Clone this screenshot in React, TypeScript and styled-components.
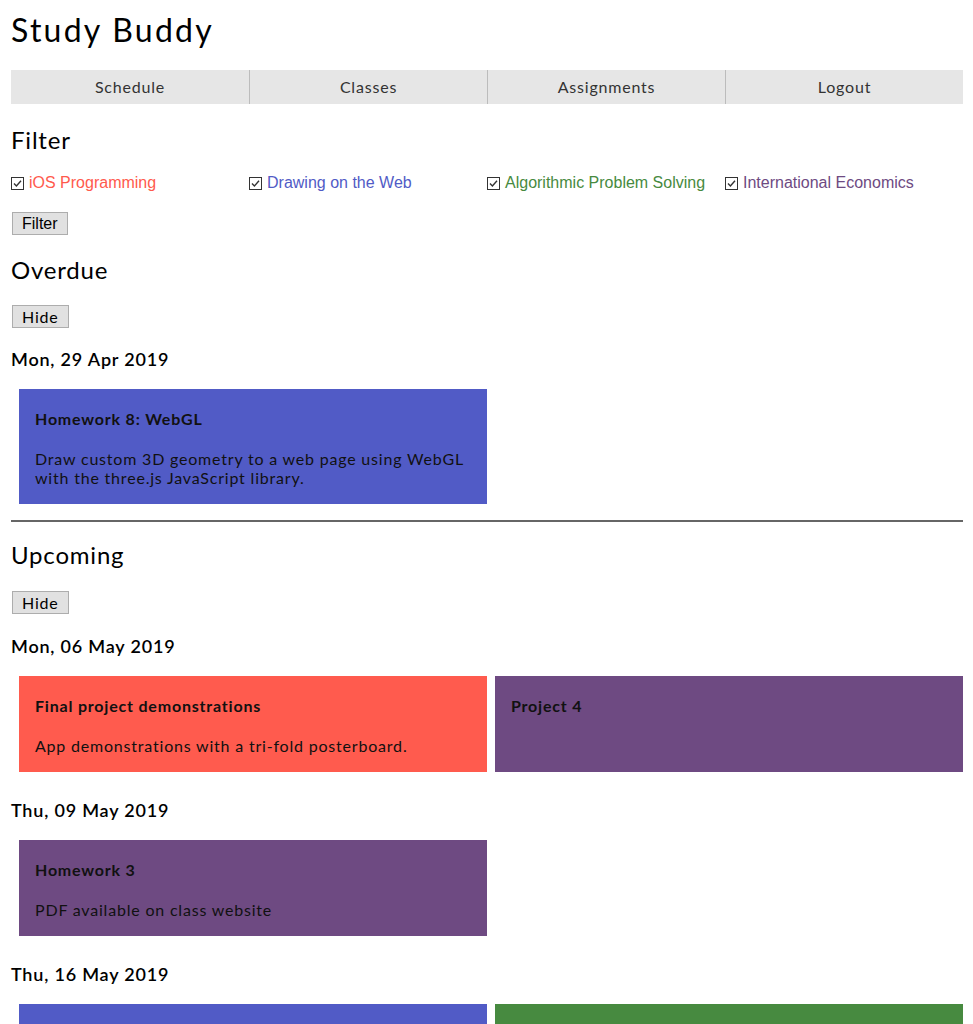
import React from "react";
import styled, { createGlobalStyle } from "styled-components";

const GlobalStyle = createGlobalStyle`
  body {
    margin: 0;
    background: #fff;
    color: #000;
    font-family: "Lato", "Liberation Sans", sans-serif;
    letter-spacing: 0.05em;
  }
`;

const classes = [
  { name: "iOS Programming", color: "#ff5a4d" },
  { name: "Drawing on the Web", color: "#515bc6" },
  { name: "Algorithmic Problem Solving", color: "#478a40" },
  { name: "International Economics", color: "#6e4a82" }
];

const CARD = {
  red: "#ff5b4e",
  blue: "#515bc6",
  green: "#478a40",
  purple: "#6e4a82"
};

interface Item {
  title?: string;
  text?: string;
  color: string;
}

interface Day {
  date: string;
  items: Item[];
}

const overdue: Day[] = [
  {
    date: "Mon, 29 Apr 2019",
    items: [
      {
        title: "Homework 8: WebGL",
        text: "Draw custom 3D geometry to a web page using WebGL with the three.js JavaScript library.",
        color: CARD.blue
      }
    ]
  }
];

const upcoming: Day[] = [
  {
    date: "Mon, 06 May 2019",
    items: [
      {
        title: "Final project demonstrations",
        text: "App demonstrations with a tri-fold posterboard.",
        color: CARD.red
      },
      { title: "Project 4", color: CARD.purple }
    ]
  },
  {
    date: "Thu, 09 May 2019",
    items: [
      { title: "Homework 3", text: "PDF available on class website", color: CARD.purple }
    ]
  },
  {
    date: "Thu, 16 May 2019",
    items: [
      { title: "Homework 9", text: "Shaders.", color: CARD.blue },
      { title: "Final exam", text: "Cumulative.", color: CARD.green }
    ]
  }
];

const CheckIcon = () => (
  <svg width="13" height="13" viewBox="0 0 13 13">
    <rect x="0.5" y="0.5" width="12" height="12" fill="#fff" stroke="#333" />
    <path d="M3 6.6 L5.4 9 L10 3.8" fill="none" stroke="#333" strokeWidth="1.4" />
  </svg>
);

const DayBlock = ({ date, items }: Day) => (
  <>
    <DateHeading>{date}</DateHeading>
    <CardGrid>
      {items.map((item, i) => (
        <Card key={i} $bg={item.color}>
          <CardTitle>{item.title}</CardTitle>
          {item.text && <CardText>{item.text}</CardText>}
        </Card>
      ))}
    </CardGrid>
  </>
);

const App = () => (
  <>
    <GlobalStyle />
    <Page>
      <Title>Study Buddy</Title>
      <Nav>
        <NavItem>Schedule</NavItem>
        <NavItem>Classes</NavItem>
        <NavItem>Assignments</NavItem>
        <NavItem>Logout</NavItem>
      </Nav>

      <SectionTitle $top={22}>Filter</SectionTitle>
      <FilterRow>
        {classes.map((c) => (
          <FilterOption key={c.name}>
            <CheckIcon />
            <FilterLabel $color={c.color}>{c.name}</FilterLabel>
          </FilterOption>
        ))}
      </FilterRow>
      <FilterButton>Filter</FilterButton>

      <SectionTitle $top={21}>Overdue</SectionTitle>
      <HideButton $top={21}>Hide</HideButton>
      {overdue.map((d) => (
        <DayBlock key={d.date} {...d} />
      ))}

      <Divider />

      <SectionTitle $top={19}>Upcoming</SectionTitle>
      <HideButton $top={22} $bottom={1}>
        Hide
      </HideButton>
      {upcoming.map((d) => (
        <DayBlock key={d.date} {...d} />
      ))}
    </Page>
  </>
);

const Page = styled.div`
  display: flex;
  flex-direction: column;
  align-items: flex-start;
  padding: 0 10px 40px 11px;
`;

const Title = styled.h1`
  font-size: 32px;
  font-weight: 400;
  letter-spacing: 0.07em;
  margin: 11px 0 0;
  line-height: 38px;
`;

const Nav = styled.nav`
  align-self: stretch;
  display: grid;
  grid-template-columns: repeat(4, 1fr);
  background: #e6e6e6;
  margin-top: 21px;
  height: 34px;
`;

const NavItem = styled.div`
  display: flex;
  align-items: center;
  justify-content: center;
  padding-bottom: 1px;
  font-size: 16px;
  color: #333;

  & + & {
    border-left: 1px solid #bcbcbc;
  }
`;

const SectionTitle = styled.h2<{ $top: number }>`
  font-size: 24px;
  font-weight: 400;
  line-height: 28px;
  margin: ${(p) => p.$top}px 0 0;
`;

const FilterRow = styled.div`
  align-self: stretch;
  display: grid;
  grid-template-columns: repeat(4, 1fr);
  margin-top: 20px;
`;

const FilterOption = styled.label`
  display: flex;
  align-items: center;
  gap: 5px;
  height: 18px;

  svg {
    flex-shrink: 0;
  }
`;

const FilterLabel = styled.span<{ $color: string }>`
  font-family: "Liberation Sans", Arial, sans-serif;
  font-size: 16px;
  letter-spacing: normal;
  color: ${(p) => p.$color};
`;

const FilterButton = styled.button`
  font-family: "Liberation Sans", Arial, sans-serif;
  font-size: 16px;
  letter-spacing: normal;
  color: #000;
  background: #e1e1e1;
  border: 1px solid #adadad;
  padding: 0 9px;
  height: 23px;
  margin: 20px 0 0 1px;
`;

const HideButton = styled.button<{ $top: number; $bottom?: number }>`
  font-family: "Lato", sans-serif;
  font-size: 16px;
  letter-spacing: 0.05em;
  color: #000;
  background: #e1e1e1;
  border: 1px solid #adadad;
  padding: 0 9px;
  height: 23px;
  margin: ${(p) => p.$top}px 0 ${(p) => p.$bottom ?? 0}px 1px;
`;

const DateHeading = styled.h3`
  font-size: 18px;
  font-weight: 600;
  line-height: 22px;
  margin: 20px 0 0;
`;

const CardGrid = styled.div`
  align-self: stretch;
  display: grid;
  grid-template-columns: 1fr 1fr;
  gap: 8px;
  padding-left: 8px;
  margin: 19px 0 7px;
`;

const Card = styled.div<{ $bg: string }>`
  background: ${(p) => p.$bg};
  padding: 20px 16px 17px;
  min-height: 96px;
  box-sizing: border-box;
  color: #111;
`;

const CardTitle = styled.h4`
  font-size: 16px;
  font-weight: 700;
  line-height: 19px;
  margin: 0;
`;

const CardText = styled.p`
  font-size: 16px;
  line-height: 19px;
  margin: 21px 0 0;
`;

const Divider = styled.hr`
  align-self: stretch;
  border: none;
  border-top: 2px solid #666;
  margin: 9px 0 0;
`;

export default App;
